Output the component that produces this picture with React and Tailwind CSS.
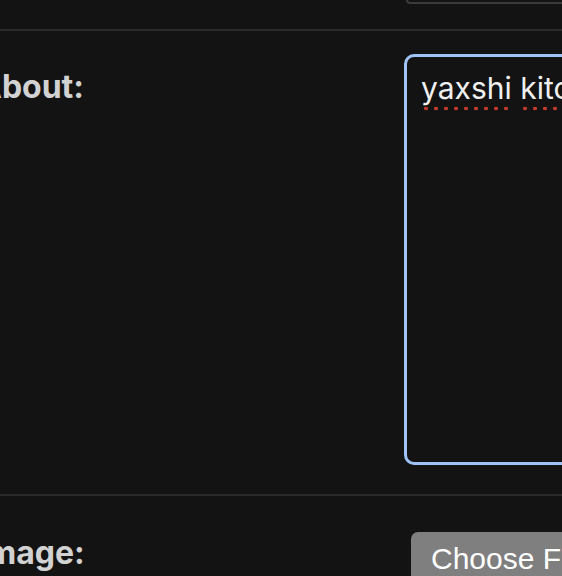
const labelFont = { fontFamily: "Inter, 'Noto Sans', sans-serif" };

function Misspelled({ children }) {
  return (
    <span className="relative">
      {children}
      <span className="absolute left-0 right-0 top-[36px] h-[5px] bg-[radial-gradient(circle,#c4392e_1.7px,transparent_2.1px)] bg-[length:10px_5px] bg-repeat-x" />
    </span>
  );
}

export default function App() {
  return (
    <div className="w-[562px] h-[576px] overflow-hidden bg-[#131313]">
      <div className="-ml-[22px] w-[900px]">
        {/* previous field, only its bottom edge is in view */}
        <div className="h-[31px] border-b-2 border-[#2b2b2b] flex">
          <div className="ml-[428px] w-[400px] h-[4px] border-2 border-t-0 border-[#3b3b3b] rounded-b-[7px]" />
        </div>

        <div className="flex pt-[23px] pb-[29px] border-b-2 border-[#2b2b2b]">
          <label
            className="w-[426px] shrink-0 pt-[15px] text-[32px] leading-[36px] font-bold text-[#d2d2d2]"
            style={labelFont}
          >
            About:
          </label>
          <div
            className="w-[380px] h-[411px] rounded-[10px] border-[3px] border-[#a0c3f7] px-[14px] pt-[13px] text-[30px] leading-[36px] text-[#f0f0f0] whitespace-nowrap"
            style={labelFont}
          >
            <Misspelled>yaxshi</Misspelled> <Misspelled>kitobi</Misspelled>
          </div>
        </div>

        <div className="flex pt-[36px]">
          <label
            className="w-[433px] shrink-0 pt-[3px] text-[32px] leading-[36px] font-bold text-[#d2d2d2]"
            style={labelFont}
          >
            Image:
          </label>
          <button
            type="button"
            className="h-[50px] px-[20px] pt-[2px] rounded-[7px] bg-[#7f7f7f] text-[30px] text-white whitespace-nowrap"
            style={{ fontFamily: "'Liberation Sans', Arial, sans-serif" }}
          >
            Choose File
          </button>
        </div>
      </div>
    </div>
  );
}
